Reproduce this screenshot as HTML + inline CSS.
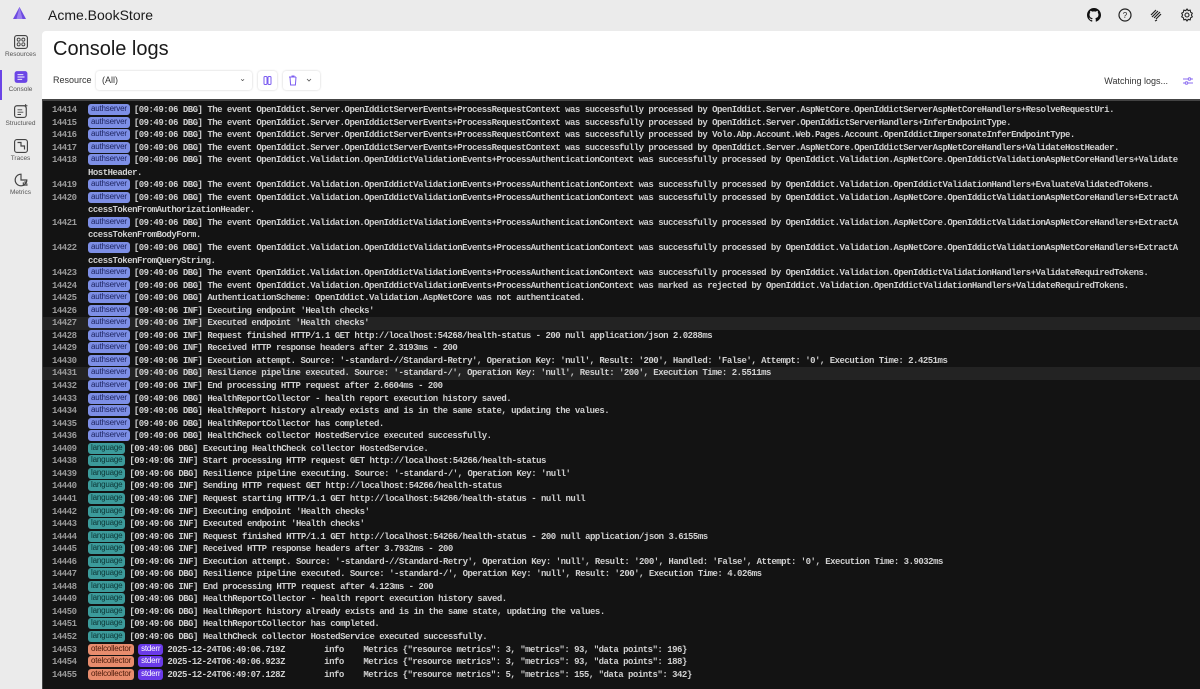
<!DOCTYPE html>
<html><head><meta charset="utf-8"><style>
*{margin:0;padding:0;box-sizing:border-box}
body{width:1200px;height:689px;overflow:hidden;background:#ebebeb;font-family:"Liberation Sans",sans-serif;position:relative}
.top{position:absolute;left:0;top:0;width:1200px;height:31px}
.title{position:absolute;left:48px;top:7px;font-size:14px;color:#1a1a1a}
.nav{position:absolute;left:0;top:32px;width:41px}
.ni{height:31.5px;text-align:center;font-size:6.5px;color:#555;position:relative;line-height:7px}
.ni svg{display:block;margin:3px auto 2px}
.main{position:absolute;left:42px;top:31px;width:1158px;height:658px;background:#fff;border-radius:4px 0 0 0}
h1{position:absolute;left:11px;top:7px;font-size:20px;font-weight:normal;color:#1a1a1a}
.res{position:absolute;left:11px;top:44px;font-size:9px;color:#333}
.sel{position:absolute;left:54px;top:40px;width:156px;height:19px;background:#fff;box-shadow:0 0 2px rgba(0,0,0,.2);border-radius:3px;font-size:9px;padding:4px 6px;color:#333}
.btn{position:absolute;top:40px;height:19px;background:#fff;box-shadow:0 0 2px rgba(0,0,0,.2);border-radius:3px}
.watch{position:absolute;right:32px;top:45px;font-size:9px;color:#333}
.log{position:absolute;left:42px;top:99px;width:1158px;height:590px;background:#131313;border-top:2px solid #444;border-left:1px solid #444;padding-top:3px;font-family:"Liberation Mono",monospace;font-size:9px;letter-spacing:-0.5px;font-weight:bold;color:#d0d0d0}
.r{height:12.56px;line-height:12.56px;white-space:pre;position:relative;padding-left:45px}
.r.h{background:#232323}
.n{position:absolute;left:9px;color:#9a9a9a;font-weight:bold}
.b{display:inline-block;font-family:"Liberation Sans",sans-serif;letter-spacing:-0.2px;font-weight:normal;font-size:8px;line-height:10px;height:11px;padding:0 3px;border-radius:3px;vertical-align:1px;margin-right:4px;color:#222}
.a{background:#7d8fe6;color:#1d2460}
.l{background:#3c9b9b;color:#0c3535}
.o{background:#e88c6d;color:#4a1a0a}
.s{background:#6a3ae8;color:#fff}
</style></head><body>
<div class="top">
<svg style="position:absolute;left:12px;top:6px" width="15" height="15" viewBox="0 0 15 15"><path d="M7.5 1L14 13H1z" fill="#6d4be0"/><path d="M7.5 1L10.5 13H4.5z" fill="#9b7ff0"/></svg>
<div class="title">Acme.BookStore</div>
<svg style="position:absolute;left:1087px;top:8px" width="14" height="14" viewBox="0 0 16 16"><path fill="#111" d="M8 0C3.6 0 0 3.6 0 8c0 3.5 2.3 6.5 5.5 7.6.4.1.5-.2.5-.4v-1.4c-2.2.5-2.7-1-2.7-1-.4-.9-.9-1.2-.9-1.2-.7-.5.1-.5.1-.5.8.1 1.2.8 1.2.8.7 1.2 1.9.9 2.3.7.1-.5.3-.9.5-1.1-1.8-.2-3.6-.9-3.6-4 0-.9.3-1.6.8-2.1-.1-.2-.4-1 .1-2.100 0 0 .7-.2 2.2.8.6-.2 1.3-.3 2-.3s1.4.1 2 .3c1.5-1 2.2-.8 2.2-.8.4 1.1.2 1.9.1 2.1.5.6.8 1.3.8 2.1 0 3.1-1.9 3.7-3.6 3.9.3.3.5.8.5 1.5v2.2c0 .2.1.5.6.4C13.700 14.5 16 11.5 16 8c0-4.4-3.6-8-8-8z"/></svg>
<svg style="position:absolute;left:1118px;top:8px" width="14" height="14" viewBox="0 0 14 14"><circle cx="7" cy="7" r="6" fill="none" stroke="#222" stroke-width="1.2"/><text x="7" y="10" font-size="8" text-anchor="middle" font-family="Liberation Sans" fill="#222">?</text></svg>
<svg style="position:absolute;left:1149px;top:8px" width="14" height="14" viewBox="0 0 14 14"><path d="M2 7l5-5M3 9l6-6M5 10l6-6M7 11l5-5M8 12l-2 1" stroke="#222" stroke-width="1.2" fill="none"/></svg>
<svg style="position:absolute;left:1180px;top:8px" width="14" height="14" viewBox="0 0 14 14"><circle cx="7" cy="7" r="2" fill="none" stroke="#222" stroke-width="1.1"/><path d="M7 1l1.2 1.6 2-.4.4 2 1.7 1-.9 1.8.9 1.8-1.7 1-.4 2-2-.4L7 13l-1.2-1.6-2 .4-.4-2-1.7-1L2.6 7l-.9-1.8 1.7-1 .4-2 2 .4z" fill="none" stroke="#222" stroke-width="1.1"/></svg>
</div>
<div class="nav">
<div class="ni"><svg width="14" height="14" viewBox="0 0 12 12"><rect x=".5" y=".5" width="11" height="11" rx="2" fill="none" stroke="#444"/><circle cx="4" cy="4" r="1.3" fill="none" stroke="#444" stroke-width=".8"/><circle cx="8" cy="4" r="1.3" fill="none" stroke="#444" stroke-width=".8"/><circle cx="4" cy="8" r="1.3" fill="none" stroke="#444" stroke-width=".8"/><circle cx="8" cy="8" r="1.3" fill="none" stroke="#444" stroke-width=".8"/></svg>Resources</div>
<div class="ni"><div style="position:absolute;left:0;top:0;width:2px;height:30px;background:#6b45e6"></div><svg width="14" height="14" viewBox="0 0 12 12"><rect x=".5" y="1" width="11" height="10" rx="2" fill="#6b45e6"/><path d="M3 4h5M3 6h6M3 8h4" stroke="#fff" stroke-width=".8"/></svg>Console</div>
<div class="ni"><svg width="14" height="14" viewBox="0 0 12 12"><rect x=".5" y="1.5" width="10" height="10" rx="2" fill="none" stroke="#444"/><path d="M3 5h4M3 7h5M3 9h3" stroke="#444" stroke-width=".8"/><path d="M10 0v3M8.5 1.5h3" stroke="#444" stroke-width=".8"/></svg>Structured</div>
<div class="ni"><svg width="14" height="14" viewBox="0 0 12 12"><rect x=".5" y=".5" width="11" height="11" rx="2" fill="none" stroke="#444"/><path d="M3 3h3v3h3v3" stroke="#444" fill="none"/></svg>Traces</div>
<div class="ni"><svg width="14" height="14" viewBox="0 0 12 12"><path d="M6 1a5 5 0 1 0 5 5H6z" fill="none" stroke="#444"/><path d="M8 8v3M9.5 7v4M11 9v2" stroke="#444"/></svg>Metrics</div>
</div>
<div class="main">
<h1>Console logs</h1>
<div class="res">Resource</div>
<div class="sel">(All)<span style="position:absolute;right:6px;top:3px;font-size:8px;color:#555">&#8964;</span></div>
<div class="btn" style="left:216px;width:19px"><svg width="19" height="19" viewBox="0 0 19 19"><rect x="6" y="5.5" width="3" height="8" rx="1" fill="none" stroke="#7b5cf0"/><rect x="10" y="5.5" width="3" height="8" rx="1" fill="none" stroke="#7b5cf0"/></svg></div>
<div class="btn" style="left:241px;width:37px"><svg width="37" height="19" viewBox="0 0 37 19"><path d="M6 6h7M7 6l.6 8h4.8l.6-8M8.5 5h3" stroke="#7b5cf0" fill="none"/><path d="M24 8l2 2 2-2" stroke="#555" fill="none" stroke-width=".8"/></svg></div>
<div class="watch">Watching logs...</div>
<svg style="position:absolute;right:6px;top:44px" width="12" height="12" viewBox="0 0 12 12"><path d="M1 4h10M1 8h10" stroke="#8b6cf0"/><circle cx="7.5" cy="4" r="1.3" fill="#fff" stroke="#8b6cf0"/><circle cx="4.5" cy="8" r="1.3" fill="#fff" stroke="#8b6cf0"/></svg>
</div>
<div class="log">
<div class="r"><span class="n">14414</span><span class="b a">authserver</span>[09:49:06 DBG] The event OpenIddict.Server.OpenIddictServerEvents+ProcessRequestContext was successfully processed by OpenIddict.Server.AspNetCore.OpenIddictServerAspNetCoreHandlers+ResolveRequestUri.</div>
<div class="r"><span class="n">14415</span><span class="b a">authserver</span>[09:49:06 DBG] The event OpenIddict.Server.OpenIddictServerEvents+ProcessRequestContext was successfully processed by OpenIddict.Server.OpenIddictServerHandlers+InferEndpointType.</div>
<div class="r"><span class="n">14416</span><span class="b a">authserver</span>[09:49:06 DBG] The event OpenIddict.Server.OpenIddictServerEvents+ProcessRequestContext was successfully processed by Volo.Abp.Account.Web.Pages.Account.OpenIddictImpersonateInferEndpointType.</div>
<div class="r"><span class="n">14417</span><span class="b a">authserver</span>[09:49:06 DBG] The event OpenIddict.Server.OpenIddictServerEvents+ProcessRequestContext was successfully processed by OpenIddict.Server.AspNetCore.OpenIddictServerAspNetCoreHandlers+ValidateHostHeader.</div>
<div class="r"><span class="n">14418</span><span class="b a">authserver</span>[09:49:06 DBG] The event OpenIddict.Validation.OpenIddictValidationEvents+ProcessAuthenticationContext was successfully processed by OpenIddict.Validation.AspNetCore.OpenIddictValidationAspNetCoreHandlers+Validate</div>
<div class="r">HostHeader.</div>
<div class="r"><span class="n">14419</span><span class="b a">authserver</span>[09:49:06 DBG] The event OpenIddict.Validation.OpenIddictValidationEvents+ProcessAuthenticationContext was successfully processed by OpenIddict.Validation.OpenIddictValidationHandlers+EvaluateValidatedTokens.</div>
<div class="r"><span class="n">14420</span><span class="b a">authserver</span>[09:49:06 DBG] The event OpenIddict.Validation.OpenIddictValidationEvents+ProcessAuthenticationContext was successfully processed by OpenIddict.Validation.AspNetCore.OpenIddictValidationAspNetCoreHandlers+ExtractA</div>
<div class="r">ccessTokenFromAuthorizationHeader.</div>
<div class="r"><span class="n">14421</span><span class="b a">authserver</span>[09:49:06 DBG] The event OpenIddict.Validation.OpenIddictValidationEvents+ProcessAuthenticationContext was successfully processed by OpenIddict.Validation.AspNetCore.OpenIddictValidationAspNetCoreHandlers+ExtractA</div>
<div class="r">ccessTokenFromBodyForm.</div>
<div class="r"><span class="n">14422</span><span class="b a">authserver</span>[09:49:06 DBG] The event OpenIddict.Validation.OpenIddictValidationEvents+ProcessAuthenticationContext was successfully processed by OpenIddict.Validation.AspNetCore.OpenIddictValidationAspNetCoreHandlers+ExtractA</div>
<div class="r">ccessTokenFromQueryString.</div>
<div class="r"><span class="n">14423</span><span class="b a">authserver</span>[09:49:06 DBG] The event OpenIddict.Validation.OpenIddictValidationEvents+ProcessAuthenticationContext was successfully processed by OpenIddict.Validation.OpenIddictValidationHandlers+ValidateRequiredTokens.</div>
<div class="r"><span class="n">14424</span><span class="b a">authserver</span>[09:49:06 DBG] The event OpenIddict.Validation.OpenIddictValidationEvents+ProcessAuthenticationContext was marked as rejected by OpenIddict.Validation.OpenIddictValidationHandlers+ValidateRequiredTokens.</div>
<div class="r"><span class="n">14425</span><span class="b a">authserver</span>[09:49:06 DBG] AuthenticationScheme: OpenIddict.Validation.AspNetCore was not authenticated.</div>
<div class="r"><span class="n">14426</span><span class="b a">authserver</span>[09:49:06 INF] Executing endpoint 'Health checks'</div>
<div class="r h"><span class="n">14427</span><span class="b a">authserver</span>[09:49:06 INF] Executed endpoint 'Health checks'</div>
<div class="r"><span class="n">14428</span><span class="b a">authserver</span>[09:49:06 INF] Request finished HTTP/1.1 GET http://localhost:54268/health-status - 200 null application/json 2.0288ms</div>
<div class="r"><span class="n">14429</span><span class="b a">authserver</span>[09:49:06 INF] Received HTTP response headers after 2.3193ms - 200</div>
<div class="r"><span class="n">14430</span><span class="b a">authserver</span>[09:49:06 INF] Execution attempt. Source: '-standard-//Standard-Retry', Operation Key: 'null', Result: '200', Handled: 'False', Attempt: '0', Execution Time: 2.4251ms</div>
<div class="r h"><span class="n">14431</span><span class="b a">authserver</span>[09:49:06 DBG] Resilience pipeline executed. Source: '-standard-/', Operation Key: 'null', Result: '200', Execution Time: 2.5511ms</div>
<div class="r"><span class="n">14432</span><span class="b a">authserver</span>[09:49:06 INF] End processing HTTP request after 2.6604ms - 200</div>
<div class="r"><span class="n">14433</span><span class="b a">authserver</span>[09:49:06 DBG] HealthReportCollector - health report execution history saved.</div>
<div class="r"><span class="n">14434</span><span class="b a">authserver</span>[09:49:06 DBG] HealthReport history already exists and is in the same state, updating the values.</div>
<div class="r"><span class="n">14435</span><span class="b a">authserver</span>[09:49:06 DBG] HealthReportCollector has completed.</div>
<div class="r"><span class="n">14436</span><span class="b a">authserver</span>[09:49:06 DBG] HealthCheck collector HostedService executed successfully.</div>
<div class="r"><span class="n">14409</span><span class="b l">language</span>[09:49:06 DBG] Executing HealthCheck collector HostedService.</div>
<div class="r"><span class="n">14438</span><span class="b l">language</span>[09:49:06 INF] Start processing HTTP request GET http://localhost:54266/health-status</div>
<div class="r"><span class="n">14439</span><span class="b l">language</span>[09:49:06 DBG] Resilience pipeline executing. Source: '-standard-/', Operation Key: 'null'</div>
<div class="r"><span class="n">14440</span><span class="b l">language</span>[09:49:06 INF] Sending HTTP request GET http://localhost:54266/health-status</div>
<div class="r"><span class="n">14441</span><span class="b l">language</span>[09:49:06 INF] Request starting HTTP/1.1 GET http://localhost:54266/health-status - null null</div>
<div class="r"><span class="n">14442</span><span class="b l">language</span>[09:49:06 INF] Executing endpoint 'Health checks'</div>
<div class="r"><span class="n">14443</span><span class="b l">language</span>[09:49:06 INF] Executed endpoint 'Health checks'</div>
<div class="r"><span class="n">14444</span><span class="b l">language</span>[09:49:06 INF] Request finished HTTP/1.1 GET http://localhost:54266/health-status - 200 null application/json 3.6155ms</div>
<div class="r"><span class="n">14445</span><span class="b l">language</span>[09:49:06 INF] Received HTTP response headers after 3.7932ms - 200</div>
<div class="r"><span class="n">14446</span><span class="b l">language</span>[09:49:06 INF] Execution attempt. Source: '-standard-//Standard-Retry', Operation Key: 'null', Result: '200', Handled: 'False', Attempt: '0', Execution Time: 3.9032ms</div>
<div class="r"><span class="n">14447</span><span class="b l">language</span>[09:49:06 DBG] Resilience pipeline executed. Source: '-standard-/', Operation Key: 'null', Result: '200', Execution Time: 4.026ms</div>
<div class="r"><span class="n">14448</span><span class="b l">language</span>[09:49:06 INF] End processing HTTP request after 4.123ms - 200</div>
<div class="r"><span class="n">14449</span><span class="b l">language</span>[09:49:06 DBG] HealthReportCollector - health report execution history saved.</div>
<div class="r"><span class="n">14450</span><span class="b l">language</span>[09:49:06 DBG] HealthReport history already exists and is in the same state, updating the values.</div>
<div class="r"><span class="n">14451</span><span class="b l">language</span>[09:49:06 DBG] HealthReportCollector has completed.</div>
<div class="r"><span class="n">14452</span><span class="b l">language</span>[09:49:06 DBG] HealthCheck collector HostedService executed successfully.</div>
<div class="r"><span class="n">14453</span><span class="b o">otelcollector</span><span class="b s">stderr</span>2025-12-24T06:49:06.719Z        info    Metrics {"resource metrics": 3, "metrics": 93, "data points": 196}</div>
<div class="r"><span class="n">14454</span><span class="b o">otelcollector</span><span class="b s">stderr</span>2025-12-24T06:49:06.923Z        info    Metrics {"resource metrics": 3, "metrics": 93, "data points": 188}</div>
<div class="r"><span class="n">14455</span><span class="b o">otelcollector</span><span class="b s">stderr</span>2025-12-24T06:49:07.128Z        info    Metrics {"resource metrics": 5, "metrics": 155, "data points": 342}</div>
</div>
</body></html>
